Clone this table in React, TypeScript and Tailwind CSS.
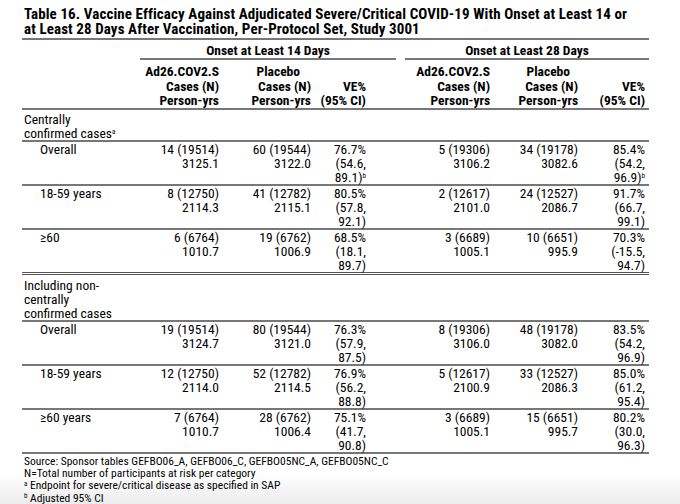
import React from 'react'

type Row = {
  label: string
  cells: string[][]
  supVe?: boolean
}

type Section = {
  title: string[]
  titleSup?: boolean
  rows: Row[]
}

const sections: Section[] = [
  {
    title: ['Centrally', 'confirmed cases'],
    titleSup: true,
    rows: [
      {
        label: 'Overall',
        cells: [['14 (19514)', '3125.1'], ['60 (19544)', '3122.0'], ['76.7%', '(54.6,', '89.1)'], ['5 (19306)', '3106.2'], ['34 (19178)', '3082.6'], ['85.4%', '(54.2,', '96.9)']],
        supVe: true,
      },
      {
        label: '18-59 years',
        cells: [['8 (12750)', '2114.3'], ['41 (12782)', '2115.1'], ['80.5%', '(57.8,', '92.1)'], ['2 (12617)', '2101.0'], ['24 (12527)', '2086.7'], ['91.7%', '(66.7,', '99.1)']],
      },
      {
        label: '≥60',
        cells: [['6 (6764)', '1010.7'], ['19 (6762)', '1006.9'], ['68.5%', '(18.1,', '89.7)'], ['3 (6689)', '1005.1'], ['10 (6651)', '995.9'], ['70.3%', '(-15.5,', '94.7)']],
      },
    ],
  },
  {
    title: ['Including non-', 'centrally', 'confirmed cases'],
    rows: [
      {
        label: 'Overall',
        cells: [['19 (19514)', '3124.7'], ['80 (19544)', '3121.0'], ['76.3%', '(57.9,', '87.5)'], ['8 (19306)', '3106.0'], ['48 (19178)', '3082.0'], ['83.5%', '(54.2,', '96.9)']],
      },
      {
        label: '18-59 years',
        cells: [['12 (12750)', '2114.0'], ['52 (12782)', '2114.5'], ['76.9%', '(56.2,', '88.8)'], ['5 (12617)', '2100.9'], ['33 (12527)', '2086.3'], ['85.0%', '(61.2,', '95.4)']],
      },
      {
        label: '≥60 years',
        cells: [['7 (6764)', '1010.7'], ['28 (6762)', '1006.4'], ['75.1%', '(41.7,', '90.8)'], ['3 (6689)', '1005.1'], ['15 (6651)', '995.7'], ['80.2%', '(30.0,', '96.3)']],
      },
    ],
  },
]

function Sup({ children }: { children: React.ReactNode }) {
  return <sup className="text-[7px] leading-none">{children}</sup>
}

function Cell({ lines, sup }: { lines: string[]; sup?: boolean }) {
  return (
    <td className="p-0 pr-[4px] text-right align-top">
      {lines.map((l, i) => (
        <div key={i}>
          {l}
          {sup && i === lines.length - 1 && <Sup>b</Sup>}
        </div>
      ))}
    </td>
  )
}

export default function App() {
  return (
    <div className="w-[680px] h-[504px] overflow-hidden text-black bg-linear-to-b from-white from-94% to-[#ececec] font-['Roboto_Condensed','Liberation_Sans',sans-serif]">
      <div className="ml-[22px] w-[627px] pt-[7px]">
        <h1 className="pl-[2px] text-[15px] font-bold leading-[15px] whitespace-nowrap tracking-[0.1px]">
          Table 16. Vaccine Efficacy Against Adjudicated Severe/Critical COVID-19 With Onset at Least 14 or
          <br />
          at Least 28 Days After Vaccination, Per-Protocol Set, Study 3001
        </h1>
        <table className="mt-[1px] w-full table-fixed border-collapse border-t-2 border-[#777] text-[13.5px] leading-[14px]">
          <colgroup>
            <col className="w-[118px]" />
            <col className="w-[83px]" />
            <col className="w-[92px]" />
            <col className="w-[55px]" />
            <col className="w-[32px]" />
            <col className="w-[92px]" />
            <col className="w-[88px]" />
            <col className="w-[67px]" />
          </colgroup>
          <thead>
            <tr>
              <th className="p-0" />
              <th colSpan={4} className="p-0 font-bold">
                <div className="mr-[6px] border-b-2 border-[#777] pt-[3px] pb-[1px] text-center">Onset at Least 14 Days</div>
              </th>
              <th colSpan={3} className="p-0 font-bold">
                <div className="ml-[3px] border-b-2 border-[#777] pt-[3px] pb-[1px] text-center">Onset at Least 28 Days</div>
              </th>
            </tr>
            <tr className="border-b-2 border-[#777] text-right align-bottom leading-[14.5px]">
              <th className="p-0" />
              <th className="p-0 pr-[4px] pt-[4px] font-bold">Ad26.COV2.S<br />Cases (N)<br />Person-yrs</th>
              <th className="p-0 pr-[4px] font-bold"><div className="pr-[11px]">Placebo</div>Cases (N)<br />Person-yrs</th>
              <th className="p-0 pr-[4px] font-bold">VE%<br />(95% CI)</th>
              <th className="p-0" />
              <th className="p-0 pr-[4px] font-bold">Ad26.COV2.S<br />Cases (N)<br />Person-yrs</th>
              <th className="p-0 pr-[4px] font-bold"><div className="pr-[8px]">Placebo</div>Cases (N)<br />Person-yrs</th>
              <th className="p-0 pr-[4px] font-bold">VE%<br />(95% CI)</th>
            </tr>
          </thead>
          {sections.map((s, si) => (
            <tbody key={si} className={si === 0 ? 'border-b-[3px] border-double border-[#555]' : 'border-b-2 border-[#777]'}>
              <tr className="border-b-2 border-[#777]">
                <td colSpan={8} className={si === 0 ? 'p-0 pl-[2px] pt-[2px]' : 'p-0 pl-[2px] pt-[3px]'}>
                  {s.title.map((t, i) => (
                    <div key={i}>
                      {t}
                      {s.titleSup && i === s.title.length - 1 && <Sup>a</Sup>}
                    </div>
                  ))}
                </td>
              </tr>
              {s.rows.map((r, ri) => (
                <tr key={ri} className={ri < s.rows.length - 1 ? 'border-b-2 border-[#777]' : ''}>
                  <td className="p-0 pl-[18px] align-top">{r.label}</td>
                  {r.cells.slice(0, 3).map((c, ci) => (
                    <Cell key={ci} lines={c} sup={ci === 2 && r.supVe} />
                  ))}
                  <td className="p-0" />
                  {r.cells.slice(3).map((c, ci) => (
                    <Cell key={ci} lines={c} sup={ci === 2 && r.supVe} />
                  ))}
                </tr>
              ))}
            </tbody>
          ))}
        </table>
        <div className="pl-[2px] pt-[1px] text-[11.5px] leading-[12.4px]">
          <div>Source: Sponsor tables GEFBO06_A, GEFBO06_C, GEFBO05NC_A, GEFBO05NC_C</div>
          <div>N=Total number of participants at risk per category</div>
          <div><Sup>a</Sup> Endpoint for severe/critical disease as specified in SAP</div>
          <div><Sup>b</Sup> Adjusted 95% CI</div>
        </div>
      </div>
    </div>
  )
}
